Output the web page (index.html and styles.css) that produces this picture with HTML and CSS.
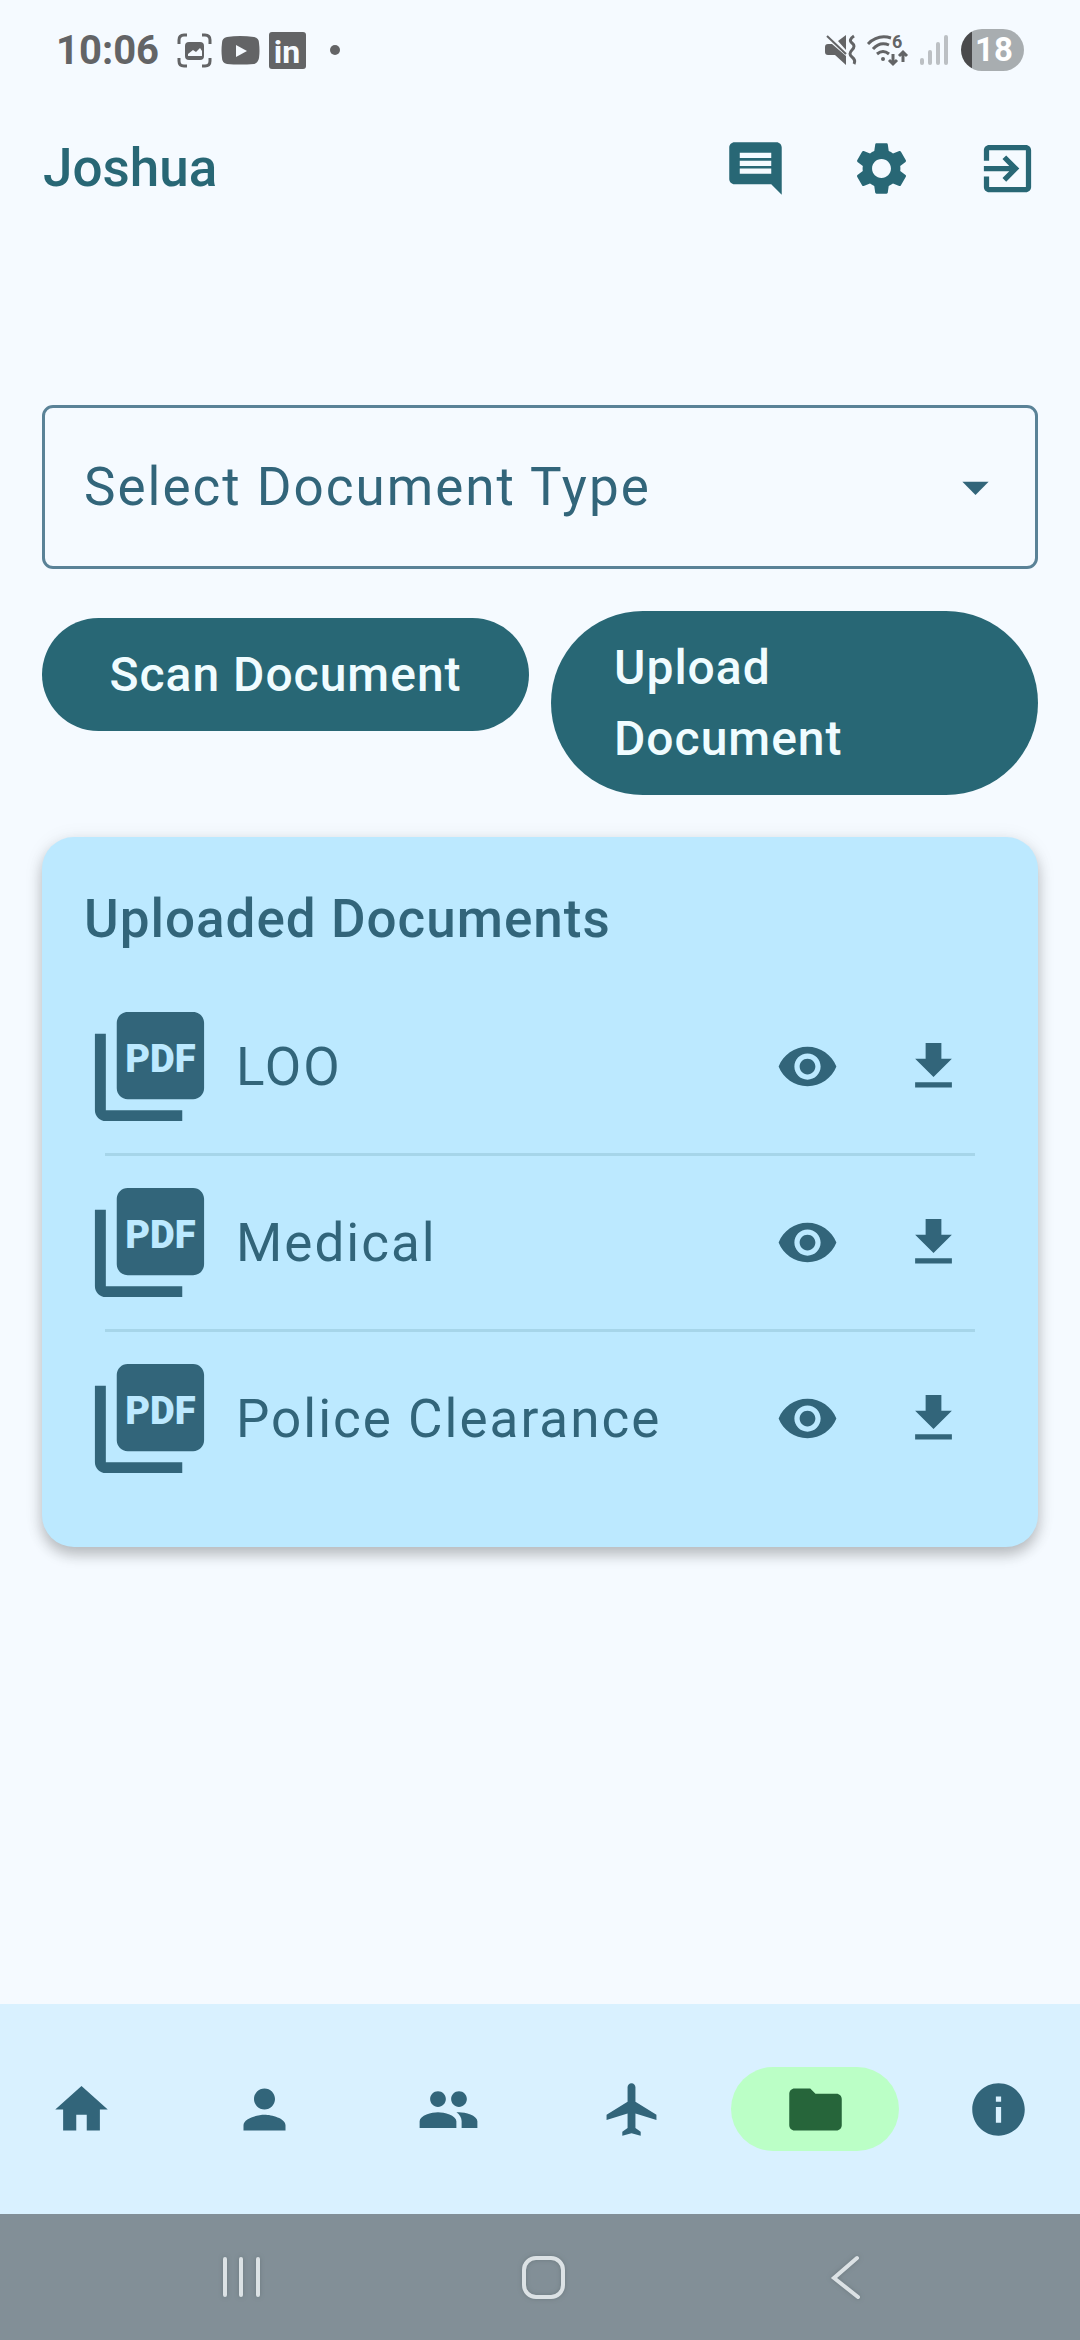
FILE: index.html
```html
<!DOCTYPE html>
<html lang="en">
<head>
    <meta charset="UTF-8" />
    <meta name="viewport" content="width=device-width, initial-scale=1" />
    <title>Documents</title>
    <link rel="stylesheet" href="styles.css">
</head>
<body>

    <!-- Shared icons -->
    <svg class="icon-defs" aria-hidden="true">
        <symbol id="icon-pdf" viewBox="0 0 24 24">
            <path d="M20 2H8c-1.100 0-2 .9-2 2v12c0 1.100.9 2 2 2h12c1.100 0 2-.9 2-2V4c0-1.100-.9-2-2-2zM4 6H2v14c0 1.100.9 2 2 2h14v-2H4V6z"/>
        </symbol>
        <symbol id="icon-eye" viewBox="0 0 24 24">
            <path d="M12 4.500C7 4.500 2.730 7.610 1 12c1.730 4.390 6 7.500 11 7.500s9.270-3.110 11-7.500c-1.730-4.390-6-7.500-11-7.500zM12 17c-2.760 0-5-2.240-5-5s2.240-5 5-5 5 2.240 5 5-2.240 5-5 5zm0-8c-1.660 0-3 1.340-3 3s1.340 3 3 3 3-1.340 3-3-1.340-3-3-3z"/>
        </symbol>
        <symbol id="icon-download" viewBox="0 0 24 24">
            <path d="M19 9h-4V3H9v6H5l7 7 7-7zM5 18v2h14v-2H5z"/>
        </symbol>
    </svg>

    <!-- Status bar -->
    <div class="status-bar">
        <div class="status-left">
            <span class="time">10:06</span>
            <svg width="35" height="35" viewBox="0 0 35 35" fill="none" stroke="currentColor" stroke-width="3">
                <path d="M2 11V7q0-5 5-5h3M25 2h3q5 0 5 5v4M33 25v3q0 5-5 5h-3M10 33H7q-5 0-5-5v-3"/>
                <rect x="8" y="9" width="19" height="18" rx="4" fill="currentColor" stroke="none"/>
                <path d="M11 23v-2l5-4 3 2 4-4 2 3v5z" fill="#f5faff" stroke="none"/>
            </svg>
            <svg width="39" height="29" viewBox="0 0 39 29">
                <path d="M6 1q13-2 27 0 5 1 5 6 1 8 0 15-1 5-5 6-14 1-27 0-5-1-5-6-1-7 0-15 0-5 5-6z"/>
                <path d="M15 9v12l11-6z" fill="#f5faff"/>
            </svg>
            <svg width="37" height="37" viewBox="0 0 37 37">
                <rect width="37" height="37" rx="3"/>
                <text class="in-text" x="18" y="31" text-anchor="middle">in</text>
            </svg>
            <span class="dot"></span>
        </div>
        <div class="status-right">
            <svg width="30" height="30" viewBox="0 0 30 30">
                <path d="M3 9h4l14 12v9L10 20H3q-3 0-3-3v-5q0-3 3-3zM21 0v15l-8-9z"/>
                <path d="M2 1l19 18" fill="none" stroke="currentColor" stroke-width="2"/>
                <path d="M29 1q-6 4-2 7t0 7-0 7 2 7" fill="none" stroke="currentColor" stroke-width="3"/>
            </svg>
            <svg width="41" height="32" viewBox="0 0 41 32" fill="none" stroke="currentColor" stroke-width="3">
                <path d="M1 10Q11 0 24 4M6 15q7-8 16-4M10 20q6-5 12 0"/>
                <circle cx="16" cy="25" r="2" fill="currentColor" stroke="none"/>
                <path d="M26 20v10M22 26l4 4 4-4M36 28V18M32 22l4-4 4 4"/>
                <text class="wifi-text" x="25" y="14">6</text>
            </svg>
            <svg class="signal" width="29" height="30" viewBox="0 0 29 30">
                <rect x="0" y="23" width="4" height="7" rx="2"/>
                <rect x="8" y="15" width="4" height="15" rx="2"/>
                <rect x="16" y="7" width="4" height="23" rx="2"/>
                <rect x="24" y="0" width="4" height="30" rx="2"/>
            </svg>
            <span class="battery">18</span>
        </div>
    </div>

    <header class="app-bar">
        <h1>Joshua</h1>
        <div class="app-actions">
            <button class="icon-btn" aria-label="Messages">
                <svg class="icon" viewBox="0 0 24 24"><path d="M21.990 4c0-1.100-.89-2-1.990-2H4c-1.100 0-2 .9-2 2v12c0 1.100.9 2 2 2h14l4 4-.01-18zM18 14H6v-2h12v2zm0-3H6V9h12v2zm0-3H6V6h12v2z"/></svg>
            </button>
            <button class="icon-btn" aria-label="Settings">
                <svg class="icon" viewBox="0 0 24 24"><path d="M19.140 12.940c.04-.3.060-.61.060-.94 0-.32-.02-.64-.07-.94l2.030-1.580c.18-.14.230-.41.120-.61l-1.920-3.320c-.12-.22-.37-.29-.59-.22l-2.390.96c-.5-.38-1.030-.7-1.620-.94l-.36-2.540c-.04-.24-.24-.41-.48-.41h-3.840c-.24 0-.43.17-.47.41l-.36 2.540c-.59.24-1.130.57-1.620.94l-2.390-.96c-.22-.08-.47 0-.59.22L2.740 8.870c-.12.21-.08.47.12.61l2.030 1.580c-.05.3-.09.63-.09.94s.02.64.07.94l-2.030 1.580c-.18.14-.23.41-.12.61l1.920 3.320c.12.22.37.29.59.22l2.390-.96c.5.38 1.030.7 1.620.94l.36 2.540c.05.24.24.41.48.41h3.840c.24 0 .44-.17.47-.41l.36-2.540c.59-.24 1.130-.56 1.620-.94l2.390.96c.22.08.47 0 .59-.22l1.920-3.320c.12-.22.07-.47-.12-.61l-2.010-1.580zM12 15.600c-1.980 0-3.600-1.620-3.600-3.600s1.620-3.600 3.600-3.600 3.600 1.620 3.600 3.600-1.620 3.600-3.600 3.600z"/></svg>
            </button>
            <button class="icon-btn" aria-label="Logout">
                <svg class="icon" viewBox="0 0 24 24"><path d="M10.090 15.590L11.500 17l5-5-5-5-1.410 1.410L12.670 11H3v2h9.670l-2.580 2.590zM19 3H5c-1.110 0-2 .9-2 2v4h2V5h14v14H5v-4H3v4c0 1.100.89 2 2 2h14c1.100 0 2-.9 2-2V5c0-1.100-.9-2-2-2z"/></svg>
            </button>
        </div>
    </header>

    <main>
        <div class="select-box">
            <select aria-label="Document type">
                <option>Select Document Type</option>
                <option>LOO</option>
                <option>Medical</option>
                <option>Police Clearance</option>
            </select>
            <svg class="icon select-arrow" viewBox="0 0 24 24"><path d="M7 10l5 5 5-5z"/></svg>
        </div>

        <div class="buttons">
            <button class="btn btn-scan">Scan Document</button>
            <button class="btn">Upload Document</button>
        </div>

        <section class="card">
            <h2>Uploaded Documents</h2>
            <ul class="doc-list">
                <li>
                    <div class="doc-row">
                        <svg class="pdf-icon" viewBox="0 0 24 24"><use href="#icon-pdf"/><text x="14" y="13" text-anchor="middle">PDF</text></svg>
                        <span class="doc-name">LOO</span>
                        <button class="icon-btn" aria-label="View LOO"><svg class="icon"><use href="#icon-eye"/></svg></button>
                        <button class="icon-btn" aria-label="Download LOO"><svg class="icon"><use href="#icon-download"/></svg></button>
                    </div>
                </li>
                <li>
                    <div class="doc-row">
                        <svg class="pdf-icon" viewBox="0 0 24 24"><use href="#icon-pdf"/><text x="14" y="13" text-anchor="middle">PDF</text></svg>
                        <span class="doc-name">Medical</span>
                        <button class="icon-btn" aria-label="View Medical"><svg class="icon"><use href="#icon-eye"/></svg></button>
                        <button class="icon-btn" aria-label="Download Medical"><svg class="icon"><use href="#icon-download"/></svg></button>
                    </div>
                </li>
                <li>
                    <div class="doc-row">
                        <svg class="pdf-icon" viewBox="0 0 24 24"><use href="#icon-pdf"/><text x="14" y="13" text-anchor="middle">PDF</text></svg>
                        <span class="doc-name">Police Clearance</span>
                        <button class="icon-btn" aria-label="View Police Clearance"><svg class="icon"><use href="#icon-eye"/></svg></button>
                        <button class="icon-btn" aria-label="Download Police Clearance"><svg class="icon"><use href="#icon-download"/></svg></button>
                    </div>
                </li>
            </ul>
        </section>
    </main>

    <!-- Bottom navigation -->
    <nav class="bottom-nav">
        <a href="#" aria-label="Home"><span class="pill"><svg class="icon" viewBox="0 0 24 24"><path d="M10 20v-6h4v6h5v-8h3L12 3 2 12h3v8z"/></svg></span></a>
        <a href="#" aria-label="Profile"><span class="pill"><svg class="icon" viewBox="0 0 24 24"><path d="M12 12c2.210 0 4-1.790 4-4s-1.790-4-4-4-4 1.790-4 4 1.790 4 4 4zm0 2c-2.670 0-8 1.340-8 4v2h16v-2c0-2.660-5.330-4-8-4z"/></svg></span></a>
        <a href="#" aria-label="Family"><span class="pill"><svg class="icon" viewBox="0 0 24 24"><path d="M16 11c1.660 0 2.990-1.340 2.990-3S17.660 5 16 5s-3 1.340-3 3 1.340 3 3 3zm-8 0c1.660 0 2.990-1.340 2.990-3S9.660 5 8 5 5 6.340 5 8s1.340 3 3 3zm0 2c-2.330 0-7 1.170-7 3.500V19h14v-2.500c0-2.330-4.670-3.500-7-3.500zm8 0c-.29 0-.62.020-.97.050 1.160.84 1.970 1.970 1.970 3.450V19h6v-2.500c0-2.330-4.670-3.500-7-3.500z"/></svg></span></a>
        <a href="#" aria-label="Travel"><span class="pill"><svg class="icon" viewBox="0 0 24 24"><path d="M21.500 16v-2L13.500 9V3.500c0-.83-.67-1.500-1.500-1.500s-1.500.67-1.500 1.500V9l-8 5v2l8-2.500V19L8.500 20.500V22l3.500-1 3.500 1v-1.500L13.500 19v-5.500l8 2.500z"/></svg></span></a>
        <a href="#" class="active" aria-label="Documents"><span class="pill"><svg class="icon" viewBox="0 0 24 24"><path d="M10 4H4c-1.100 0-1.990.9-1.990 2L2 18c0 1.100.9 2 2 2h16c1.100 0 2-.9 2-2V8c0-1.100-.9-2-2-2h-8l-2-2z"/></svg></span></a>
        <a href="#" aria-label="Info"><span class="pill"><svg class="icon" viewBox="0 0 24 24"><path d="M12 2C6.480 2 2 6.480 2 12s4.480 10 10 10 10-4.480 10-10S17.520 2 12 2zm1 15h-2v-6h2v6zm0-8h-2V7h2v2z"/></svg></span></a>
    </nav>

    <!-- System navigation -->
    <div class="system-nav">
        <button aria-label="Recent apps"><svg width="46" height="46" viewBox="0 0 46 46"><path d="M5 5v36M21 5v36M38 5v36"/></svg></button>
        <button aria-label="Home screen"><svg width="46" height="46" viewBox="0 0 46 46"><rect x="3" y="4" width="39" height="39" rx="12"/></svg></button>
        <button aria-label="Back"><svg width="46" height="46" viewBox="0 0 46 46"><path d="M36 4L13 24l24 19"/></svg></button>
    </div>

</body>
</html>
```
FILE: styles.css
```css
* {
    margin: 0;
    padding: 0;
    box-sizing: border-box;
    font-family: Roboto, 'Liberation Sans', sans-serif;
}
body {
    min-height: 100vh;
    display: flex;
    flex-direction: column;
    background: #f5faff;
    color: #32657a;
}
button {
    border: none;
    background: none;
    color: inherit;
    cursor: pointer;
}
svg {
    fill: currentColor;
    flex-shrink: 0;
    overflow: visible;
}
svg[fill="none"] {
    fill: none;
}
.icon-defs {
    display: none;
}
.icon {
    display: block;
    width: 63px;
    height: 63px;
}
.icon-btn {
    width: 126px;
    height: 126px;
    display: flex;
    align-items: center;
    justify-content: center;
    flex-shrink: 0;
}

/* Status bar */
.status-bar {
    height: 100px;
    padding: 0 56px;
    display: flex;
    justify-content: space-between;
    align-items: center;
    color: #636466;
}
.status-left,
.status-right {
    display: flex;
    align-items: center;
}
.status-left {
    gap: 9px;
}
.time {
    font-size: 40px;
    font-weight: 700;
    margin-right: 9px;
}
.in-text {
    font-size: 32px;
    font-weight: 700;
    fill: #f5faff;
}
.dot {
    width: 10px;
    height: 10px;
    margin-left: 15px;
    border-radius: 50%;
    background: #636466;
}
.status-right {
    gap: 12px;
}
.wifi-text {
    font-size: 18px;
    font-weight: 700;
    fill: #636466;
    stroke: none;
}
.signal {
    color: #bcc0c4;
}
.battery {
    width: 63px;
    height: 42px;
    padding-left: 3px;
    border-radius: 21px;
    background: linear-gradient(to right, #4a4a4c 11px, #a8adb0 11px);
    color: #fff;
    font-size: 33px;
    font-weight: 700;
    line-height: 42px;
    text-align: center;
}

/* App bar */
.app-bar {
    height: 136px;
    padding: 0 10px 0 43px;
    display: flex;
    justify-content: space-between;
    align-items: center;
    color: #286775;
}
.app-bar h1 {
    font-size: 53px;
    font-weight: 500;
}
.app-actions {
    display: flex;
}

main {
    flex: 1;
    padding: 169px 42px 42px;
}

/* Document type select */
.select-box {
    position: relative;
}
.select-box select {
    display: block;
    width: 100%;
    height: 164px;
    padding: 0 110px 0 39px;
    appearance: none;
    border: 3px solid #5a8297;
    border-radius: 11px;
    background: transparent;
    color: #32657a;
    font-size: 53px;
    letter-spacing: 2px;
}
.select-arrow {
    position: absolute;
    right: 31px;
    top: 50%;
    transform: translateY(-50%);
    pointer-events: none;
}

/* Scan / upload buttons */
.buttons {
    display: grid;
    grid-template-columns: 1fr 1fr;
    gap: 22px;
    align-items: start;
    margin: 42px 0;
}
.btn {
    padding: 21px 63px;
    border-radius: 92px;
    background: #286775;
    color: #f0fcff;
    font-size: 48px;
    font-weight: 500;
    line-height: 71px;
    letter-spacing: 1px;
    text-align: left;
}
.btn-scan {
    margin-top: 7px;
    text-align: center;
}

/* Uploaded documents */
.card {
    padding: 42px 42px 63px;
    border-radius: 32px;
    background: #bce9ff;
    box-shadow: 0 8px 14px rgba(0, 0, 0, 0.22), 0 2px 20px rgba(0, 0, 0, 0.08);
}
.card h2 {
    margin-bottom: 42px;
    font-size: 53px;
    font-weight: 500;
    line-height: 80px;
    letter-spacing: 1px;
}
.doc-list {
    list-style: none;
}
.doc-list li + li::before {
    content: '';
    display: block;
    height: 3px;
    margin: 21px;
    background: #a6d5e9;
}
.doc-row {
    height: 131px;
    display: flex;
    align-items: center;
}
.pdf-icon {
    width: 131px;
    height: 131px;
    margin-right: 21px;
}
.pdf-icon text {
    font-size: 7px;
    font-weight: 900;
    fill: #bce9ff;
}
.doc-name {
    flex: 1;
    font-size: 53px;
    letter-spacing: 2px;
}

/* Bottom navigation */
.bottom-nav {
    height: 210px;
    display: flex;
    gap: 21px;
    align-items: center;
    background: #d9f1ff;
    overflow: hidden;
}
.bottom-nav a {
    flex: 1;
    min-width: 0;
    display: flex;
    justify-content: center;
    color: #32657a;
}
.pill {
    width: 168px;
    height: 84px;
    display: flex;
    align-items: center;
    justify-content: center;
    flex-shrink: 0;
    border-radius: 42px;
}
.bottom-nav a.active .pill {
    background: #bbffc6;
    color: #26653a;
}

/* System navigation */
.system-nav {
    height: 126px;
    padding-left: 7px;
    display: flex;
    justify-content: center;
    align-items: center;
    background: #828f97;
}
.system-nav button {
    width: 28%;
    height: 100%;
    display: flex;
    align-items: center;
    justify-content: center;
}
.system-nav svg {
    fill: none;
    stroke: #dce2e5;
    stroke-width: 4;
    stroke-linecap: round;
    filter: drop-shadow(0 0 2px #6c797f);
}
```
